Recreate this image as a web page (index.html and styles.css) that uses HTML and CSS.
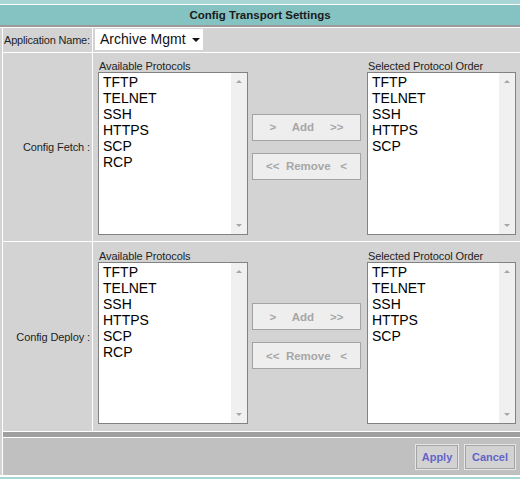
FILE: index.html
```html
<!DOCTYPE html>
<html lang="en">
<head>
  <meta charset="UTF-8" />
  <title>Config Transport Settings</title>
  <link rel="stylesheet" href="styles.css">
</head>
<body>
  <div class="page">
    <div class="band"></div>
    <div class="title">Config Transport Settings</div>

    <div class="table">
      <div class="row app-row">
        <div class="label">Application Name:</div>
        <div class="cell">
          <div class="select">Archive Mgmt <span class="caret"></span></div>
        </div>
      </div>

      <div class="row proto-row">
        <div class="label right">Config Fetch :</div>
        <div class="cell picker">
          <div class="list-col">
            <div class="caption">Available Protocols</div>
            <div class="listbox">
              <ul>
                <li>TFTP</li>
                <li>TELNET</li>
                <li>SSH</li>
                <li>HTTPS</li>
                <li>SCP</li>
                <li>RCP</li>
              </ul>
              <div class="scroll"><span class="up"></span><span class="down"></span></div>
            </div>
          </div>
          <div class="actions">
            <button disabled>&gt;     Add     &gt;&gt;</button>
            <button disabled>&lt;&lt;  Remove   &lt;</button>
          </div>
          <div class="list-col selected">
            <div class="caption">Selected Protocol Order</div>
            <div class="listbox">
              <ul>
                <li>TFTP</li>
                <li>TELNET</li>
                <li>SSH</li>
                <li>HTTPS</li>
                <li>SCP</li>
              </ul>
              <div class="scroll"><span class="up"></span><span class="down"></span></div>
            </div>
          </div>
        </div>
      </div>

      <div class="row proto-row deploy">
        <div class="label right">Config Deploy :</div>
        <div class="cell picker">
          <div class="list-col">
            <div class="caption">Available Protocols</div>
            <div class="listbox">
              <ul>
                <li>TFTP</li>
                <li>TELNET</li>
                <li>SSH</li>
                <li>HTTPS</li>
                <li>SCP</li>
                <li>RCP</li>
              </ul>
              <div class="scroll"><span class="up"></span><span class="down"></span></div>
            </div>
          </div>
          <div class="actions">
            <button disabled>&gt;     Add     &gt;&gt;</button>
            <button disabled>&lt;&lt;  Remove   &lt;</button>
          </div>
          <div class="list-col selected">
            <div class="caption">Selected Protocol Order</div>
            <div class="listbox">
              <ul>
                <li>TFTP</li>
                <li>TELNET</li>
                <li>SSH</li>
                <li>HTTPS</li>
                <li>SCP</li>
              </ul>
              <div class="scroll"><span class="up"></span><span class="down"></span></div>
            </div>
          </div>
        </div>
      </div>

      <div class="divider"></div>

      <div class="footer">
        <button class="form-btn apply">Apply</button>
        <button class="form-btn cancel">Cancel</button>
      </div>
    </div>

    <div class="band bottom"></div>
  </div>
</body>
</html>
```

FILE: styles.css
```css
body {
  margin: 0;
  background-color: #fff;
  font-family: 'Liberation Sans', Arial, sans-serif;
  color: #1e1e1e;
}

.page {
  width: 520px;
  height: 479px;
  overflow: hidden;
}

.band {
  height: 4px;
  background-color: #a8d6d6;
}

.band.bottom {
  margin-top: 2px;
}

.title {
  margin-top: 1px;
  height: 20px;
  line-height: 20px;
  background-color: #85c2c2;
  border-bottom: 2px solid #9a9a9a;
  text-align: center;
  font-size: 11.5px;
  font-weight: bold;
  color: #1a1a1a;
}

.table {
  margin-top: 1px;
  border-left: 2px solid #d3d3d3;
  padding-left: 1px;
  display: flex;
  flex-direction: column;
  gap: 1px;
  background-color: #fff;
}

.row {
  display: grid;
  grid-template-columns: 89px 1fr;
  gap: 1px;
}

.row > div {
  background-color: #d3d3d3;
}

.label {
  font-size: 11px;
  letter-spacing: -0.2px;
  white-space: nowrap;
  display: flex;
  align-items: center;
  padding-left: 1px;
}

.label.right {
  justify-content: flex-end;
  padding-left: 0;
  padding-right: 2px;
  letter-spacing: -0.1px;
}

.app-row {
  height: 24px;
}

.select {
  position: relative;
  margin: 1px 0 0 2px;
  width: 103px;
  height: 21px;
  line-height: 21px;
  padding-left: 5px;
  background-color: #fff;
  font-size: 14px;
  color: #111;
}

.caret {
  position: absolute;
  left: 97px;
  top: 9px;
  border-left: 4px solid transparent;
  border-right: 4px solid transparent;
  border-top: 4px solid #111;
}

.proto-row {
  height: 188px;
}

.proto-row.deploy {
  height: 189px;
}

.picker {
  display: flex;
  padding-left: 5px;
}

.list-col {
  width: 150px;
  padding-top: 7px;
}

.deploy .list-col {
  padding-top: 8px;
}

.list-col.selected {
  width: 149px;
  margin-left: 6px;
}

.caption {
  font-size: 11px;
  letter-spacing: -0.1px;
  line-height: 12px;
  padding-left: 1px;
}

.listbox {
  display: flex;
  height: 163px;
  box-sizing: border-box;
  border: 1px solid #828282;
  background-color: #fff;
}

.deploy .listbox {
  height: 162px;
}

.listbox ul {
  flex: 1;
  list-style: none;
  margin: 0;
  padding: 1px 0 0 4px;
  font-size: 14px;
  line-height: 16px;
  color: #000;
}

.scroll {
  position: relative;
  width: 16px;
  background-color: #f0f0f0;
}

.scroll span {
  position: absolute;
  left: 5px;
  border-left: 3px solid transparent;
  border-right: 3px solid transparent;
}

.scroll .up {
  top: 7px;
  border-bottom: 3px solid #a6a6a6;
}

.scroll .down {
  bottom: 7px;
  border-top: 3px solid #a6a6a6;
}

.actions {
  align-self: center;
  display: flex;
  flex-direction: column;
  gap: 12px;
  margin-left: 4px;
  margin-top: -1px;
}

.actions button {
  width: 109px;
  height: 27px;
  padding: 0;
  border: 1px solid #a3a3a3;
  background-color: #eeeeee;
  font-family: 'Liberation Sans', Arial, sans-serif;
  font-size: 11.5px;
  font-weight: bold;
  color: #a6a6a6;
  white-space: pre;
}

.divider {
  height: 5px;
  background-color: #a0a0a0;
}

.footer {
  height: 37px;
  box-sizing: border-box;
  padding: 7px 5px 0 0;
  display: flex;
  justify-content: flex-end;
  align-items: flex-start;
  gap: 7px;
  background-color: #c0c0c0;
}

.form-btn {
  height: 24px;
  padding: 0;
  border: 1px solid #a4a4a4;
  box-shadow: 0 0 0 1px #e6e6e6;
  background-color: #d2d2d2;
  font-family: 'Liberation Sans', Arial, sans-serif;
  font-size: 11px;
  font-weight: bold;
  color: #6464c8;
}

.form-btn.apply {
  width: 42px;
}

.form-btn.cancel {
  width: 50px;
}
```
